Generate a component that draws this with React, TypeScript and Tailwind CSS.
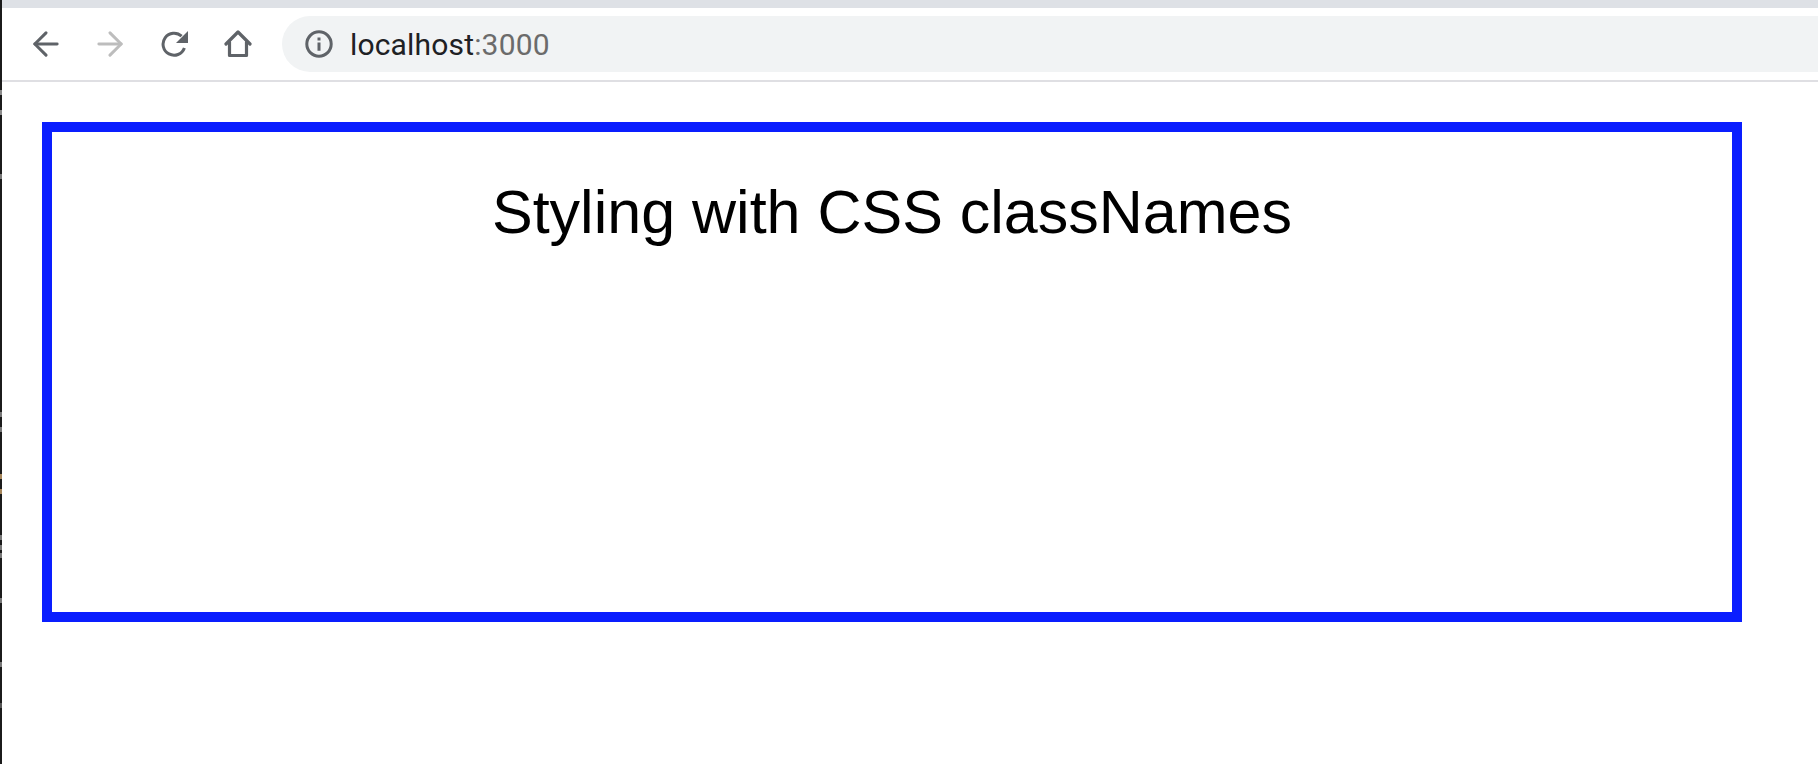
import React from 'react';

const SPECKS = [
  { top: 90, color: 'bg-[#8a8a8a]' },
  { top: 110, color: 'bg-[#8a8a8a]' },
  { top: 174, color: 'bg-[#777777]' },
  { top: 412, color: 'bg-[#777777]' },
  { top: 427, color: 'bg-[#777777]' },
  { top: 474, color: 'bg-[#a5855a]' },
  { top: 489, color: 'bg-[#a5855a]' },
  { top: 535, color: 'bg-[#777777]' },
  { top: 545, color: 'bg-[#777777]' },
  { top: 553, color: 'bg-[#777777]' },
  { top: 598, color: 'bg-[#777777]' },
  { top: 662, color: 'bg-[#777777]' },
  { top: 703, color: 'bg-[#555555]' },
];

function BackIcon({ className }: { className: string }) {
  return (
    <svg viewBox="0 0 28 28" className={className} fill="none" stroke="currentColor" strokeWidth="3.2" strokeLinecap="round" strokeLinejoin="round">
      <path d="M26 14H2" />
      <path d="M14 2 2 14l12 12" />
    </svg>
  );
}

function ForwardIcon({ className }: { className: string }) {
  return (
    <svg viewBox="0 0 28 28" className={className} fill="none" stroke="currentColor" strokeWidth="3.2" strokeLinecap="round" strokeLinejoin="round">
      <path d="M2 14h24" />
      <path d="M14 2l12 12-12 12" />
    </svg>
  );
}

function ReloadIcon({ className }: { className: string }) {
  return (
    <svg viewBox="0 0 28 28" className={className} fill="none">
      <path d="M23.4 18A11 11 0 1 1 20.6 6.2" stroke="currentColor" strokeWidth="3" />
      <path d="M27 1v12H15z" fill="currentColor" />
    </svg>
  );
}

function HomeIcon({ className }: { className: string }) {
  return (
    <svg viewBox="0 0 28 28" className={className} fill="none" stroke="currentColor" strokeWidth="3.2" strokeLinejoin="round" strokeLinecap="round">
      <path d="M2 14 14 2l12 12" />
      <path d="M5.5 12v13.5h17V12" />
    </svg>
  );
}

function InfoIcon({ className }: { className: string }) {
  return (
    <svg viewBox="0 0 28 28" className={className} fill="none">
      <circle cx="14" cy="14" r="12.2" stroke="currentColor" strokeWidth="3" />
      <path d="M12.5 7.5h3v3h-3zM12.5 12.4h3v8.4h-3z" fill="currentColor" />
    </svg>
  );
}

export default function App() {
  return (
    <div className="relative flex h-[764px] w-full overflow-hidden bg-white font-['Liberation_Sans',sans-serif]">
      <div className="relative h-full w-[2px] shrink-0 bg-[#1b1b1b]">
        {SPECKS.map((speck) => (
          <span
            key={speck.top}
            className={`absolute left-0 h-[5px] w-[2px] ${speck.color}`}
            style={{ top: speck.top }}
          />
        ))}
      </div>

      <div className="flex min-w-0 flex-1 flex-col">
        <div className="h-2 bg-[#dee1e6]" />

        <div className="flex h-[74px] items-center border-b-2 border-[#dfdfe3]">
          <div className="flex w-[280px] shrink-0 items-center pl-[31px] text-[#5f6368]">
            <BackIcon className="h-[26px] w-[26px]" />
            <ForwardIcon className="ml-[38px] h-[26px] w-[26px] text-[#bdbdbd]" />
            <ReloadIcon className="ml-[38px] h-[28px] w-[28px]" />
            <HomeIcon className="ml-[35px] h-[28px] w-[28px]" />
          </div>
          <div className="flex h-14 flex-1 items-center rounded-l-[28px] bg-[#f1f3f4] pl-[23px]">
            <InfoIcon className="h-[28px] w-[28px] text-[#5f6368]" />
            <span className="ml-[17px] font-['Roboto',sans-serif] text-[30px] tracking-[0.17px] text-[#202124]">
              localhost<span className="text-[#6b6b6b]">:3000</span>
            </span>
          </div>
        </div>

        <div className="pl-10 pt-[40px]">
          <div className="h-[500px] w-[1700px] border-[10px] border-[#0a1eff] pt-[45px] text-center">
            <h1 className="text-[61px] leading-[70px] font-normal text-black">Styling with CSS classNames</h1>
          </div>
        </div>
      </div>
    </div>
  );
}
